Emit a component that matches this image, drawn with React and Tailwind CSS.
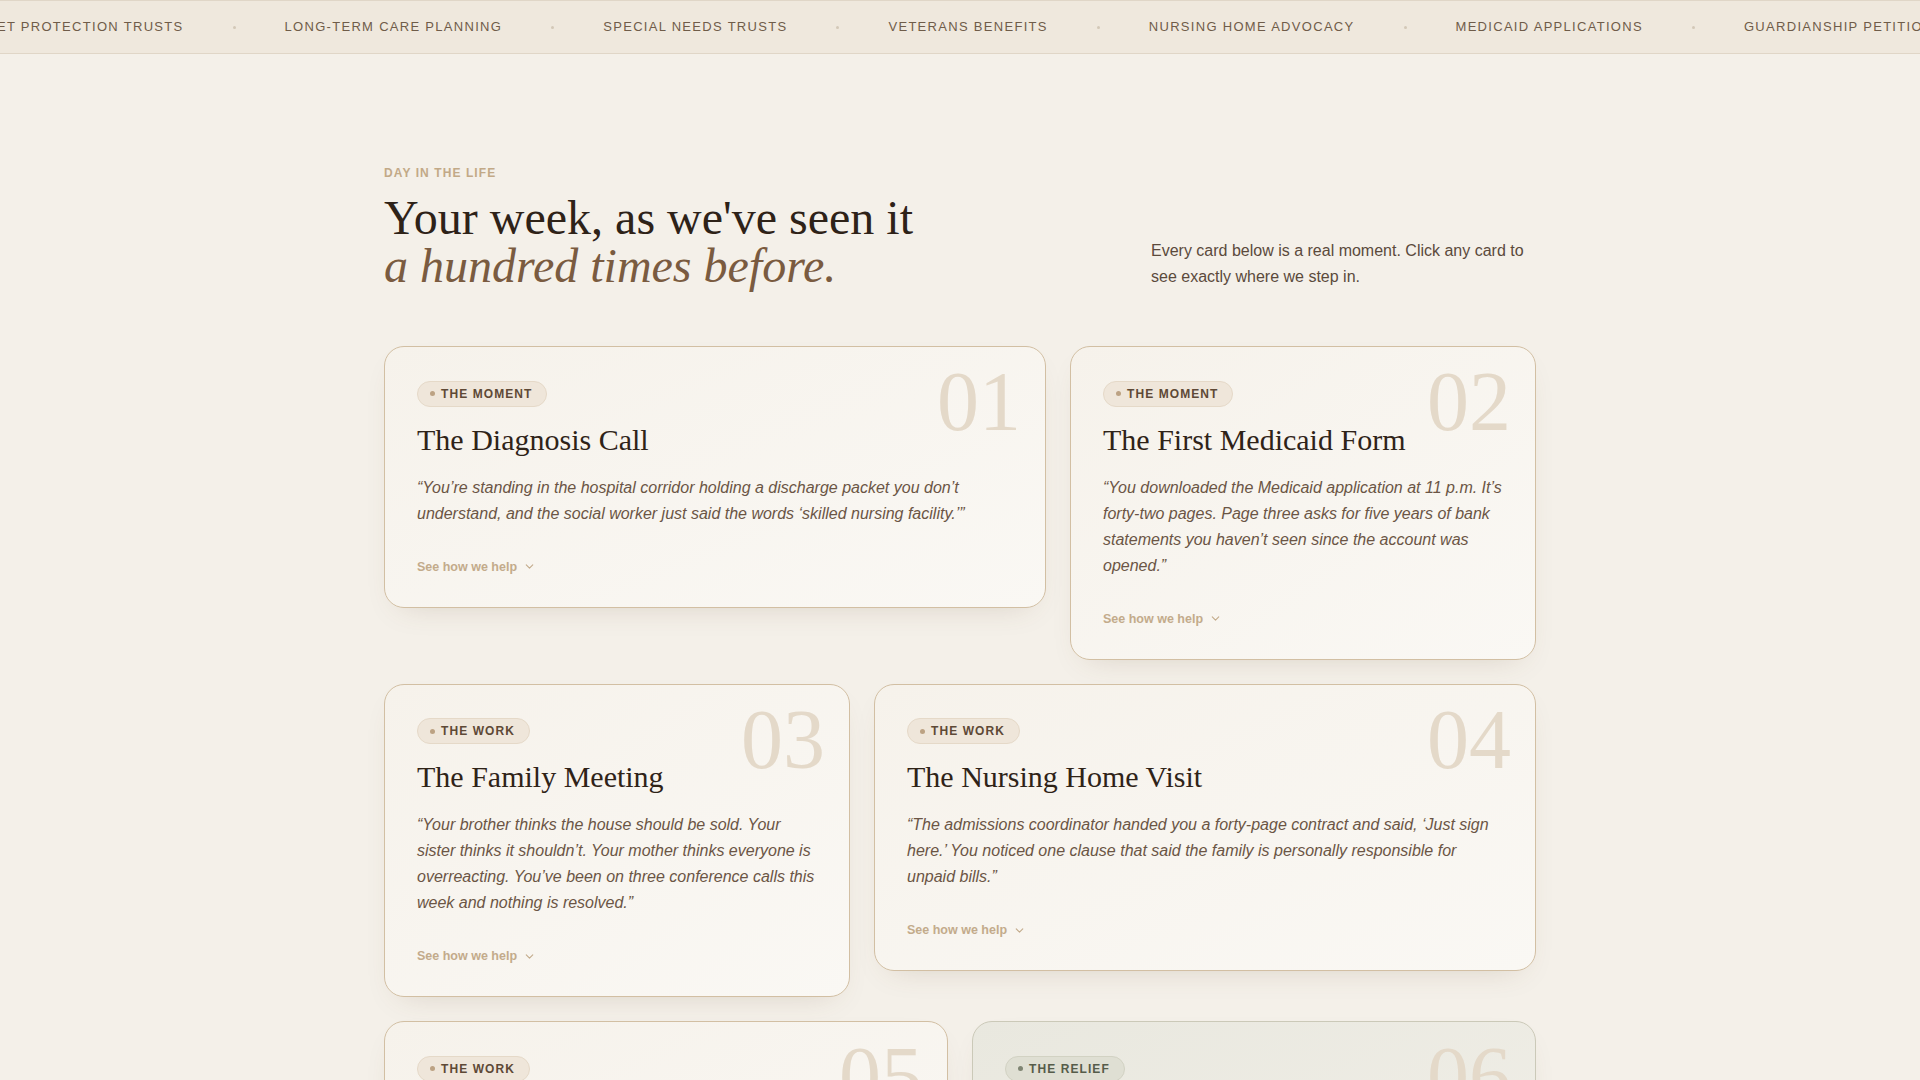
import { ChevronDown } from 'lucide-react'

const services = [
  'Asset Protection Trusts',
  'Long-Term Care Planning',
  'Special Needs Trusts',
  'Veterans Benefits',
  'Nursing Home Advocacy',
  'Medicaid Applications',
  'Guardianship Petitions',
  'Estate Planning',
]

const cards = [
  {
    n: '01',
    tag: 'The Moment',
    title: 'The Diagnosis Call',
    quote: '“You’re standing in the hospital corridor holding a discharge packet you don’t understand, and the social worker just said the words ‘skilled nursing facility.’”',
    span: 'col-span-7',
  },
  {
    n: '02',
    tag: 'The Moment',
    title: 'The First Medicaid Form',
    quote: '“You downloaded the Medicaid application at 11 p.m. It’s forty-two pages. Page three asks for five years of bank statements you haven’t seen since the account was opened.”',
    span: 'col-span-5',
  },
  {
    n: '03',
    tag: 'The Work',
    title: 'The Family Meeting',
    quote: '“Your brother thinks the house should be sold. Your sister thinks it shouldn’t. Your mother thinks everyone is overreacting. You’ve been on three conference calls this week and nothing is resolved.”',
    span: 'col-span-5',
  },
  {
    n: '04',
    tag: 'The Work',
    title: 'The Nursing Home Visit',
    quote: '“The admissions coordinator handed you a forty-page contract and said, ‘Just sign here.’ You noticed one clause that said the family is personally responsible for unpaid bills.”',
    span: 'col-span-7',
  },
  {
    n: '05',
    tag: 'The Work',
    title: 'The Spend-Down Plan',
    quote: '“Someone told you the savings would have to be gone before help arrives. You’ve started lying awake doing the math on a napkin.”',
    span: 'col-span-6',
  },
  {
    n: '06',
    tag: 'The Relief',
    title: 'The Approval Letter',
    quote: '“The envelope is thin this time. One page. Approved. You read it twice, then you call your sister.”',
    span: 'col-span-6',
    relief: true,
  },
]

const Card = ({ card }) => {
  const relief = card.relief
  return (
    <div
      className={
        'relative rounded-[20px] border px-8 pt-8 pb-[30px] shadow-[0_12px_32px_-18px_rgba(110,80,50,0.25)] ' +
        card.span +
        (relief
          ? ' border-[#cbc9b8] bg-gradient-to-br from-[#e9e8df] to-[#f1efe8]'
          : ' border-[#d2bfa3] bg-gradient-to-br from-[#f6f2eb] to-[#faf8f4]')
      }
    >
      <div className="absolute top-[13px] right-6 font-['Liberation_Serif',serif] text-[84px] leading-none text-[#e4d9c9] select-none">
        {card.n}
      </div>

      <div
        className={
          'inline-flex h-[26px] items-center gap-1.5 rounded-full border pl-3 pr-3.5 ' +
          (relief ? 'border-[#d2d2c3] bg-[#dfdfd3]' : 'border-[#e5d9c8] bg-[#efe6da]')
        }
      >
        <span className={'h-[5px] w-[5px] rounded-full ' + (relief ? 'bg-[#7f8573]' : 'bg-[#bca283]')}></span>
        <span
          className={
            'text-[12px] font-bold uppercase tracking-[0.09em] ' + (relief ? 'text-[#565c4a]' : 'text-[#5e4936]')
          }
        >
          {card.tag}
        </span>
      </div>

      <h3 className="relative mt-[15px] font-['Liberation_Serif',serif] text-[30px] leading-[36px] text-[#2f2318]">
        {card.title}
      </h3>

      <p className="relative mt-[17px] text-[16px] leading-[26px] italic text-[#6b5545]">
        {card.quote}
      </p>

      <button className="mt-[30px] flex items-center gap-1.5 text-[12.5px] font-bold leading-5 text-[#c3ab8b]">
        <span>See how we help</span>
        <ChevronDown size={13} strokeWidth={2} />
      </button>
    </div>
  )
}

const App = () => {
  return (
    <div className="min-h-screen bg-[#f4f0e9] font-['Liberation_Sans',Arial,sans-serif]">
      {/* Ticker */}
      <div className="h-[54px] overflow-hidden border-y border-[#e0d6c7] bg-[#efe8dd]">
        <div className="ml-[-33px] flex h-full items-center gap-[49px] whitespace-nowrap">
          {services.map((s, i) => (
            <div key={s} className="flex items-center gap-[49px]">
              {i > 0 && <span className="h-[3px] w-[3px] rounded-full bg-[#d3c8b8]"></span>}
              <span className="text-[13px] uppercase tracking-[0.1em] text-[#6f5c49]">{s}</span>
            </div>
          ))}
        </div>
      </div>

      <section className="mx-auto max-w-6xl pt-[110px] pb-24">
        <div className="mb-14 flex items-end justify-between">
          <div>
            <p className="mb-3 text-[12px] font-bold uppercase tracking-[0.09em] text-[#c2a987]">Day in the life</p>
            <h2 className="font-['Liberation_Serif',serif] text-[48px] leading-[48px] text-[#2e2218]">
              Your week, as we've seen it
              <br />
              <em className="text-[#7a5b40]">a hundred times before.</em>
            </h2>
          </div>
          <p className="w-[385px] text-[16px] leading-[26px] text-[#5b4a3c]">
            Every card below is a real moment. Click any card to see exactly where we step in.
          </p>
        </div>

        <div className="grid grid-cols-12 items-start gap-6">
          {cards.map((c) => (
            <Card key={c.n} card={c} />
          ))}
        </div>
      </section>
    </div>
  )
}

export default App
